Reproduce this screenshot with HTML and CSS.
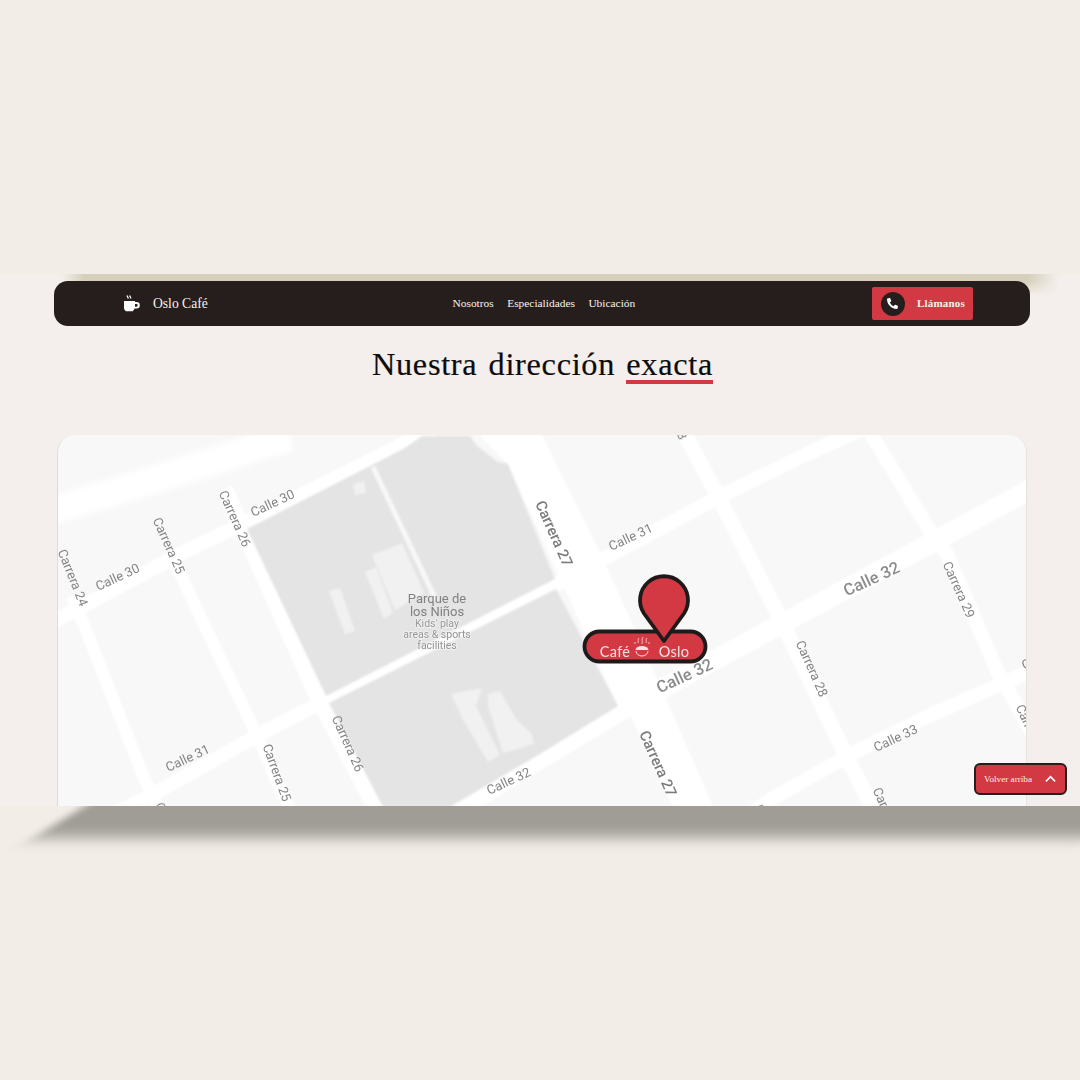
FILE: index.html
```html
<!DOCTYPE html>
<html lang="es">
<head>
<meta charset="utf-8">
<title>Oslo Café</title>
<link rel="stylesheet" href="styles.css">
</head>
<body>
<main class="viewport">
  <div class="nav-wrap">
    <div class="nav-glow"></div>
    <nav class="nav">
      <a class="brand">
        <svg class="brand-icon" viewBox="0 0 18 18" aria-hidden="true">
          <path class="steam" d="M4 .6l1.4 3M6.6 .6L8 3.6"/>
          <path class="cup" d="M1 6h11v1h1.6a3 3 0 0 1 0 6.4h-2a5 5 0 0 1-1.6 2.4v.4H2.6v-.4C1.400 15 1 13.800 1 12.500zM12 9v2.700h1.400a1.350 1.350 0 0 0 0-2.700z"/>
        </svg>
        <span>Oslo Café</span>
      </a>
      <ul class="nav-links">
        <li>Nosotros</li>
        <li>Especialidades</li>
        <li>Ubicación</li>
      </ul>
      <a class="call">
        <span class="call-icon">
          <svg viewBox="0 0 512 512" aria-hidden="true"><path d="M497.39 361.8l-112-48a24 24 0 0 0-28 6.900l-49.600 60.600A370.660 370.660 0 0 1 130.600 204.110l60.600-49.600a23.940 23.940 0 0 0 6.900-28l-48-112A24.160 24.160 0 0 0 122.600.610l-104 24A24 24 0 0 0 0 48c0 256.500 207.900 464 464 464a24 24 0 0 0 23.400-18.600l24-104a24.290 24.290 0 0 0-14.010-27.600z"/></svg>
        </span>
        <span class="call-label">Llámanos</span>
      </a>
    </nav>
  </div>

  <h1 class="title">Nuestra dirección <span class="title-mark">exacta</span></h1>

  <section class="map">
    <svg class="map-art" viewBox="58 434 968 372" role="img" aria-label="Mapa de Café Oslo">
      <rect class="ground" x="58" y="434" width="968" height="372"/>
      <path class="road w28 soft" d="M40 513L150 480L290 436"/>
      <g class="base">
        <path class="road w14" d="M40 628L85 604L188 549L247 521L405 442L500 395"/>
        <path class="road w14" d="M40 851L157 791L260 733L326 699L553 585L603 558L717 497L807 453L880 420"/>
        <path class="road w20" d="M1040 483L787 620L707 663L620 710L540 758L430 825"/>
        <path class="road w14" d="M1040 666L933 713L857 750L773 797L740 820"/>
        <path class="road w12" d="M72 595L78 609L143 774L170 835"/>
        <path class="road w12" d="M170 552L181 575L253 726L274 774L300 830"/>
        <path class="road w16" d="M225 488L239 520L318 697L375 806L390 830"/>
        <path class="road w15" d="M675 415L717 493L780 617L847 757L885 830"/>
        <path class="road w14" d="M860 415L930 530L947 553L997 670L1040 745"/>
        <polygon class="road-fill" points="475,430 540,430 603,558 667,700 713,806 673,806 630,713 618,705 508,463"/>

        <polygon class="park" points="247,528 405,447 422,435 470,435 477,445 498,461 508,463 555,578 326,695"/>
        <polygon class="park" points="329,702 556,588 618,705 540,753 450,806 383,806"/>
        <path class="path" d="M373 466L436 599"/>
        <polygon class="building" points="372,554 402,542 424,592 395,609"/>
        <polygon class="building" points="365,571 376,566 393,612 384,618"/>
        <polygon class="building" points="329,590 340,587 355,630 345,633"/>
        <polygon class="building" points="353,483 364,480 366,492 355,494"/>
        <polygon class="building" points="451,693 482,687 476,705 500,754 488,761 462,717"/>
        <polygon class="building" points="488,693 500,690 517,719 532,733 534,743 503,752 488,705"/>
      </g>

      <g class="labels">
        <text transform="translate(273 503) rotate(-25)">Calle 30</text>
        <text transform="translate(118 577) rotate(-25)">Calle 30</text>
        <text transform="translate(234 518) rotate(66)">Carrera 26</text>
        <text transform="translate(168 545) rotate(66)">Carrera 25</text>
        <text transform="translate(72 577) rotate(68)">Carrera 24</text>
        <text class="big" transform="translate(553 533) rotate(66)">Carrera 27</text>
        <text transform="translate(631 537) rotate(-25)">Calle 31</text>
        <text class="large" transform="translate(872 579) rotate(-25)">Calle 32</text>
        <text class="large" transform="translate(685 676) rotate(-25)">Calle 32</text>
        <text transform="translate(958 589) rotate(66)">Carrera 29</text>
        <text transform="translate(811 668) rotate(66)">Carrera 28</text>
        <text transform="translate(896 738) rotate(-25)">Calle 33</text>
        <text class="big" transform="translate(657 763) rotate(66)">Carrera 27</text>
        <text transform="translate(888 815) rotate(66)">Carrera 28</text>
        <text transform="translate(188 758) rotate(-25)">Calle 31</text>
        <text transform="translate(347 743) rotate(66)">Carrera 26</text>
        <text transform="translate(276 772) rotate(70)">Carrera 25</text>
        <text transform="translate(509 781) rotate(-25)">Calle 32</text>
        <text transform="translate(170 830) rotate(66)">Carrera 24</text>
        <text transform="translate(1031 732) rotate(66)">Carrera 29</text>
        <text transform="translate(670 411) rotate(66)">Carrera 28</text>
        <text transform="translate(745 818) rotate(-25)">Calle 33</text>
        <text transform="translate(1044 656) rotate(-25)">Calle 33</text>
      </g>

      <g class="park-label">
        <text class="park-name" x="437" y="602">Parque de</text>
        <text class="park-name" x="437" y="615">los Niños</text>
        <text class="park-note" x="437" y="626">Kids' play</text>
        <text class="park-note" x="437" y="637">areas &amp; sports</text>
        <text class="park-note" x="437" y="648">facilities</text>
      </g>

      <g class="marker">
        <rect class="pill" x="584.500" y="630.500" width="121" height="30" rx="15"/>
        <text class="pill-text" x="615" y="656">Café</text>
        <text class="pill-text" x="674" y="656">Oslo</text>
        <path class="logo-steam" d="M638 642c1-2-1-3 1-5M642 643c1-3-1-4 1-7M646 642c1-2-1-3 1-5M634 642h2M648 642h2"/>
        <path class="logo-cup" d="M635.500 649a6.500 4 0 0 1 13 0z"/>
        <path class="logo-rim" d="M636 650a6 5 0 0 0 12 0"/>
        <path class="pin" d="M664 640L644 612.500A24 24 0 1 1 684 612.500Z"/>
      </g>
    </svg>
  </section>
</main>

<div class="floor"><div class="floor-shadow"></div></div>

<a class="back-top">
  <span>Volver arriba</span>
  <svg viewBox="0 0 12 8" aria-hidden="true"><path d="M1 6.500L6 1.500L11 6.500"/></svg>
</a>
</body>
</html>
```

FILE: styles.css
```css
* { box-sizing: border-box; }

html, body {
  margin: 0;
  height: 1080px;
  overflow: hidden;
}

body {
  position: relative;
  padding-top: 274px;
  background: #f2ede7;
  font-family: "Liberation Serif", "Times New Roman", serif;
  color: #0d0b0b;
}

.viewport {
  height: 532px;
  overflow: hidden;
  padding-top: 7px;
  background: #f4efec;
}

.nav-wrap {
  position: relative;
  margin: 0 50px 0 54px;
}

.nav-glow {
  position: absolute;
  top: -7px;
  left: 8px;
  right: -28px;
  height: 24px;
  background: linear-gradient(to bottom, #d6cfbb 7px, rgba(214, 207, 187, 0) 22px);
  -webkit-mask-image: linear-gradient(to right, transparent 0, #000 22px, #000 calc(100% - 30px), transparent 100%);
  mask-image: linear-gradient(to right, transparent 0, #000 22px, #000 calc(100% - 30px), transparent 100%);
}

.nav {
  position: relative;
  display: flex;
  align-items: center;
  justify-content: space-between;
  height: 45px;
  padding: 0 57px 0 69px;
  background: #261e1c;
  border-radius: 14px;
  color: #f7f3ee;
}

.brand {
  display: flex;
  align-items: center;
  gap: 12px;
  font-size: 13.600px;
}

.brand-icon {
  width: 18px;
  height: 18px;
}

.steam {
  fill: none;
  stroke: #fff;
  stroke-width: 1.300;
}

.cup { fill: #fff; fill-rule: evenodd; }

.nav-links {
  display: flex;
  gap: 13.500px;
  margin: 0 0 1px 8px;
  padding: 0;
  list-style: none;
  font-size: 11.400px;
}

.call {
  display: flex;
  align-items: center;
  gap: 12px;
  width: 101px;
  height: 33px;
  padding-left: 9px;
  background: #d23942;
  border-radius: 2px;
  font-size: 11px;
  font-weight: 700;
  letter-spacing: 0.200px;
}

.call-label { margin-bottom: 1px; }

.call-icon {
  display: flex;
  align-items: center;
  justify-content: center;
  width: 24px;
  height: 24px;
  background: #261e1c;
  border-radius: 50%;
}

.call-icon svg {
  width: 11px;
  height: 11px;
  fill: #fff;
}

.title {
  width: max-content;
  margin: 19px auto 51px;
  padding-left: 5px;
  font-size: 32.300px;
  font-weight: 400;
  line-height: 38px;
  letter-spacing: 0.700px;
  word-spacing: 2.500px;
  -webkit-text-stroke: 0.200px #0d0b0b;
}

.title-mark {
  display: inline-block;
  height: 38px;
  border-bottom: 4px solid #d23942;
  line-height: 36px;
}

.map {
  width: 970px;
  height: 372px;
  margin-left: 57px;
  overflow: hidden;
  border-left: 1px solid #dfdcd8;
  border-right: 1px solid #e6e3df;
  border-radius: 18px 18px 0 0;
}

.map-art {
  display: block;
  width: 968px;
  height: 372px;
}

.base { filter: blur(0.800px); }
.soft { filter: blur(3px); }

.labels,
.park-label,
.marker { filter: blur(0.400px); }

.ground { fill: #f8f8f8; }

.road {
  fill: none;
  stroke: #fff;
  stroke-linecap: butt;
  stroke-linejoin: round;
}

.w12 { stroke-width: 12px; }
.w14 { stroke-width: 14px; }
.w15 { stroke-width: 15px; }
.w16 { stroke-width: 16px; }
.w20 { stroke-width: 20px; }
.w28 { stroke-width: 28px; }

.road-fill { fill: #fff; }
.park { fill: #e4e4e4; }
.path { fill: none; stroke: #f8f8f8; stroke-width: 5px; }
.building { fill: #f1f1f1; }

.labels text {
  font-family: Roboto, "Liberation Sans", sans-serif;
  font-size: 13px;
  fill: #858585;
  text-anchor: middle;
  dominant-baseline: middle;
}

.labels text.big {
  font-size: 15px;
  font-weight: 500;
  fill: #7c7c7c;
}

.labels text.large {
  font-size: 16.500px;
  font-weight: 500;
  fill: #8c8c8c;
}

.park-label text {
  font-family: Roboto, "Liberation Sans", sans-serif;
  text-anchor: middle;
}

.park-name {
  font-size: 13px;
  fill: #808080;
}

.park-note {
  font-size: 10.500px;
  fill: #959595;
  stroke: #f4f4f4;
  stroke-width: 1.500px;
  paint-order: stroke;
}

.pill,
.pin {
  fill: #d23942;
  stroke: #1f1a1a;
  stroke-width: 3.800px;
}

.pin { stroke-linejoin: round; }

.pill-text {
  font-family: Lato, "Liberation Sans", sans-serif;
  font-size: 14.500px;
  letter-spacing: 0.300px;
  fill: #f6e3e3;
  text-anchor: middle;
}

.logo-steam {
  fill: none;
  stroke: #f6e3e3;
  stroke-width: 0.800px;
}

.logo-cup { fill: #f6e3e3; }

.logo-rim {
  fill: none;
  stroke: #f6e3e3;
  stroke-width: 1px;
}

.floor {
  height: 60px;
  overflow: hidden;
  position: relative;
}

.floor-shadow {
  position: absolute;
  top: -20px;
  left: 75px;
  right: -60px;
  height: 52px;
  background: #a09d97;
  filter: blur(7px);
  transform: skewX(-58deg);
}

.back-top {
  position: absolute;
  top: 763px;
  left: 974px;
  display: flex;
  align-items: center;
  justify-content: space-between;
  width: 93px;
  height: 32px;
  padding: 0 9px 0 8px;
  background: #d23942;
  border: 2px solid #261e1c;
  border-radius: 6px;
  color: #fbeeee;
  font-size: 9.200px;
}

.back-top svg {
  width: 11px;
  height: 8px;
  fill: none;
  stroke: #fff;
  stroke-width: 1.800px;
}
```
